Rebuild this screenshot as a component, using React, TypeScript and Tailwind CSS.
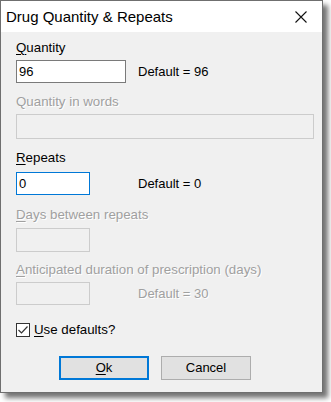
import React from "react";

const font = { fontFamily: '"Liberation Sans", Arial, sans-serif' };

function Label({ children, disabled }: { children: React.ReactNode; disabled?: boolean }) {
  return (
    <div
      className={
        "h-[15px] leading-[15px] text-[13.3px] whitespace-nowrap " +
        (disabled ? "text-[#a0a0a0] [text-shadow:1px_1px_0_#ffffff]" : "text-black")
      }
    >
      {children}
    </div>
  );
}

export default function App() {
  return (
    <div className="w-[331px] h-[402px] bg-white" style={font}>
      <div className="w-[323px] h-[393px] border border-[#6f6f6f] bg-[#f0f0f0] flex flex-col shadow-[5px_5px_5px_rgba(0,0,0,0.55)]">
        {/* Title bar */}
        <div className="h-[31px] bg-white flex items-center justify-between pl-[5px] pr-[15px]">
          <span className="text-[15px] text-black leading-none">Drug Quantity &amp; Repeats</span>
          <svg width="12" height="12" viewBox="0 0 12 12" className="mt-[1px]">
            <path d="M0.5 0.5 L11.5 11.5 M11.5 0.5 L0.5 11.5" stroke="#111" strokeWidth="1.1" fill="none" />
          </svg>
        </div>

        {/* Body */}
        <div className="flex flex-col pl-[15px]">
          <div className="mt-[8px]">
            <Label>
              <u className="underline-offset-2">Q</u>uantity
            </Label>
          </div>
          <div className="mt-[5px] flex items-center">
            <div className="w-[110px] h-[23px] bg-white border border-[#7a7a7a] flex items-center px-[2px] text-[13px] text-black">
              96
            </div>
            <span className="ml-[12px] text-[13px] text-black">Default = 96</span>
          </div>

          <div className="mt-[11px]">
            <Label disabled>Quantity in words</Label>
          </div>
          <div className="mt-[5px] w-[298px] h-[25px] bg-[#f0f0f0] border border-[#cccccc]" />

          <div className="mt-[11px]">
            <Label>
              <u className="underline-offset-2">R</u>epeats
            </Label>
          </div>
          <div className="mt-[7px] flex items-center">
            <div className="w-[74px] h-[23px] bg-white border border-[#0078d7] flex items-center px-[2px] text-[13px] text-black">
              0
            </div>
            <span className="ml-[48px] text-[13px] text-black">Default = 0</span>
          </div>

          <div className="mt-[12px]">
            <Label disabled>
              <u className="underline-offset-2">D</u>ays between repeats
            </Label>
          </div>
          <div className="mt-[6px] w-[74px] h-[24px] bg-[#f0f0f0] border border-[#cccccc]" />

          <div className="mt-[10px]">
            <Label disabled>
              <u className="underline-offset-2">A</u>nticipated duration of prescription (days)
            </Label>
          </div>
          <div className="mt-[5px] flex items-center">
            <div className="w-[74px] h-[23px] bg-[#f0f0f0] border border-[#cccccc]" />
            <span className="ml-[48px] text-[13px] text-[#a0a0a0] [text-shadow:1px_1px_0_#ffffff]">Default = 30</span>
          </div>

          <div className="mt-[17px] flex items-center">
            <div className="w-[14px] h-[14px] bg-white border border-[#333333] flex items-center justify-center">
              <svg width="12" height="12" viewBox="0 0 12 12">
                <path d="M1.5 6 L4.5 9 L10.5 2.5" stroke="#333" strokeWidth="1.2" fill="none" />
              </svg>
            </div>
            <span className="ml-[4px] text-[13.3px] text-black leading-[15px]">
              <u className="underline-offset-2">U</u>se defaults?
            </span>
          </div>

          <div className="mt-[19px] flex pl-[43px] gap-[12px]">
            <div className="w-[90px] h-[24px] bg-[#e1e1e1] border-2 border-[#0078d7] flex items-center justify-center text-[13px] text-black">
              <span>
                <u className="underline-offset-2">O</u>k
              </span>
            </div>
            <div className="w-[90px] h-[24px] bg-[#e1e1e1] border border-[#adadad] flex items-center justify-center text-[13px] text-black">
              Cancel
            </div>
          </div>
        </div>
      </div>
    </div>
  );
}
